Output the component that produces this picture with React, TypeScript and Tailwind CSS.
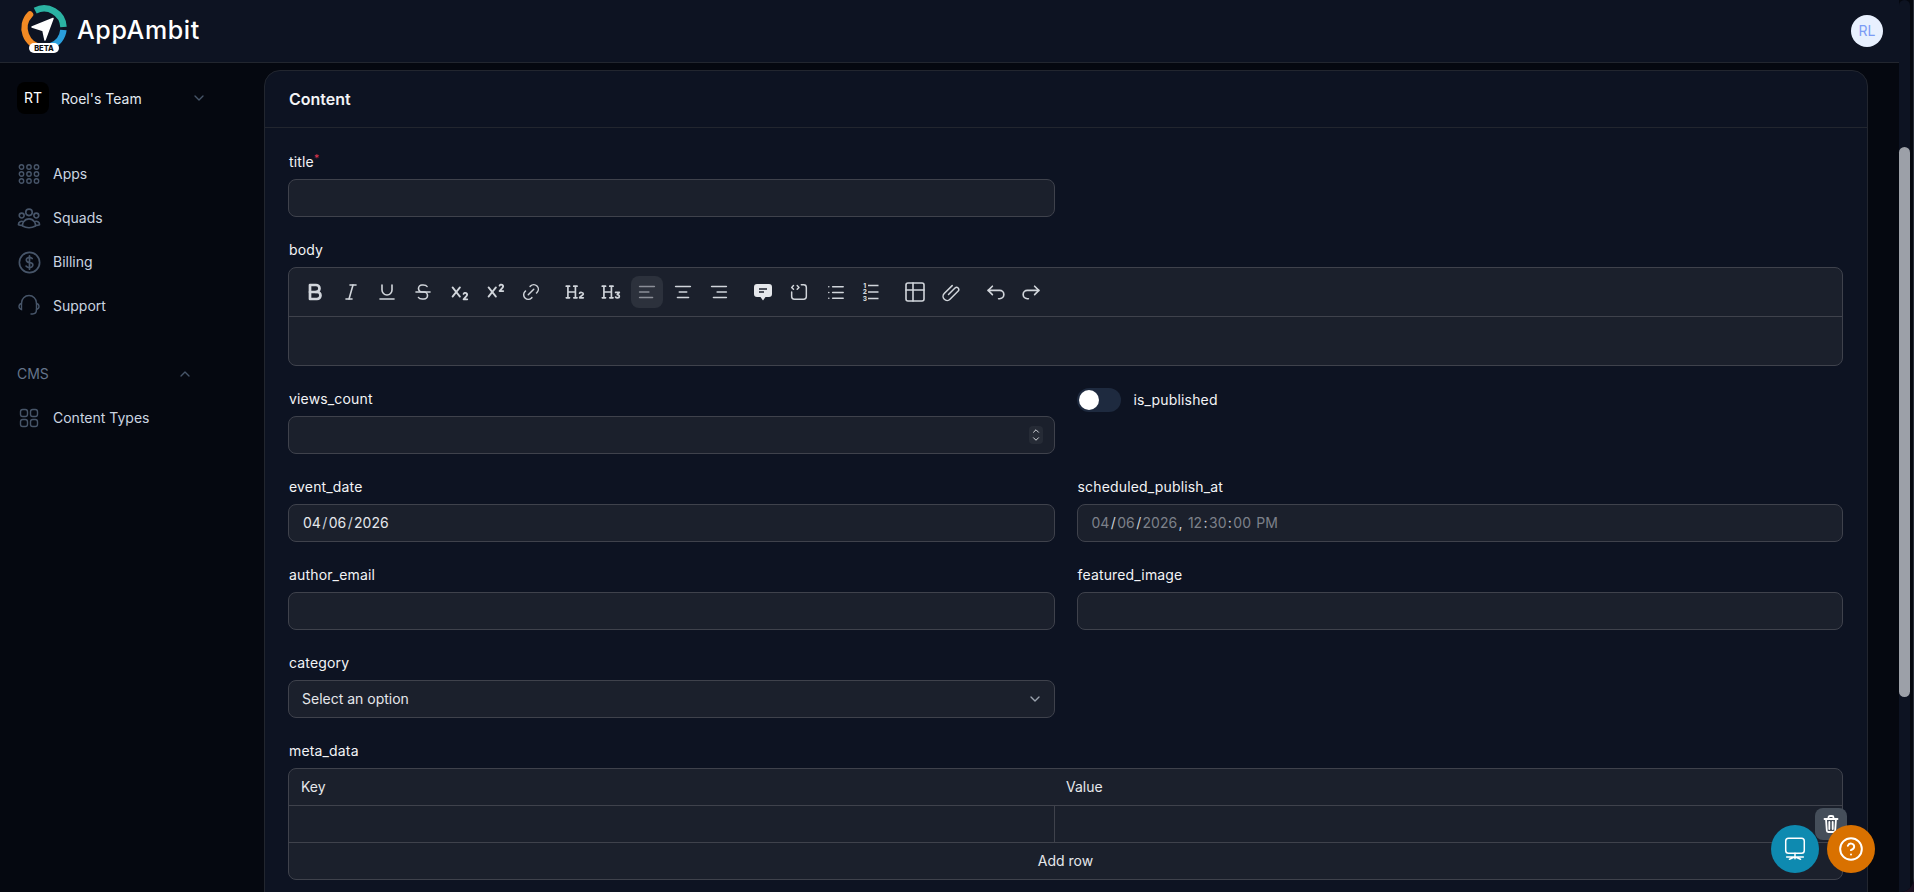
import type { ReactNode } from 'react';
import { ChevronDown, ChevronUp, CircleHelp } from 'lucide-react';
import {
  TbAlignCenter,
  TbAlignLeft,
  TbAlignRight,
  TbArrowBackUp,
  TbArrowForwardUp,
  TbBold,
  TbItalic,
  TbLink,
  TbList,
  TbSourceCode,
  TbStrikethrough,
  TbSubscript,
  TbSuperscript,
  TbTable,
  TbUnderline,
} from 'react-icons/tb';
import { HiOutlineCurrencyDollar, HiOutlineUserGroup } from 'react-icons/hi2';

const font = { fontFamily: 'Inter, sans-serif' };

function Logo() {
  return (
    <svg width="50" height="56" viewBox="0 0 50 56" className="shrink-0">
      <path d="M16.2 7.6A19.5 19.5 0 0 1 44.5 24" fill="none" stroke="#2bb3a3" strokeWidth="6.5" />
      <path d="M11 11.5A19.5 19.5 0 0 0 23 44.4" fill="none" stroke="#f28a24" strokeWidth="6.5" strokeLinecap="round" />
      <path d="M44.4 27A19.5 19.5 0 0 1 31.4 43.3" fill="none" stroke="#2a9fdc" strokeWidth="6.5" />
      <path d="M34 15.5 13 24 24 27.5 26 37Z" fill="#fff" stroke="#fff" strokeWidth="1.5" strokeLinejoin="round" />
      <rect x="10" y="40" width="30" height="10" rx="5" fill="#fff" />
      <text x="25" y="48" textAnchor="middle" fontSize="7.5" fontWeight="800" fill="#111" fontFamily="Inter, sans-serif">
        BETA
      </text>
    </svg>
  );
}

function AppsIcon() {
  return (
    <svg width="22" height="22" viewBox="0 0 22 22" fill="none" stroke="#475569" strokeWidth="1.4">
      {[4, 11, 18].map((y) =>
        [3.5, 11, 18.5].map((x) => <circle key={`${x}-${y}`} cx={x} cy={y} r="2.2" />),
      )}
    </svg>
  );
}

function SupportIcon() {
  return (
    <svg width="24" height="24" viewBox="0 0 24 24" fill="none" stroke="#475569" strokeWidth="1.4" strokeLinecap="round">
      <path d="M4.5 9.5V9a7.5 7.5 0 0 1 15 0v.5" />
      <path d="M4.5 9.5c-1.8.5-2.5 1.8-2.5 3s.8 2.5 2.5 3Z" />
      <path d="M19.5 9.5c1.8.5 2.5 1.8 2.5 3s-.8 2.5-2.5 3Z" />
      <path d="M19.5 15.5c0 3-1.5 4.5-4 4.5h-1.5" />
    </svg>
  );
}

function TypesIcon() {
  return (
    <svg width="20" height="20" viewBox="0 0 20 20" fill="none" stroke="#475569" strokeWidth="1.4">
      <rect x="1.5" y="1.5" width="7" height="7" rx="2.2" />
      <rect x="11.5" y="1.5" width="7" height="7" rx="2.2" />
      <rect x="1.5" y="11.5" width="7" height="7" rx="2.2" />
      <rect x="11.5" y="11.5" width="7" height="7" rx="2.2" />
    </svg>
  );
}

function HeadingIcon({ level }: { level: 2 | 3 }) {
  return (
    <svg width="20" height="20" viewBox="0 0 24 24" fill="none" stroke="currentColor" strokeWidth="2" strokeLinecap="round" strokeLinejoin="round">
      <path d="M1.5 5h4M3.5 5v14M1.5 19h4M10.5 5h4M12.5 5v14M10.5 19h4M3.5 12h9" />
      {level === 2 ? (
        <path d="M17.5 13.5c.6-1.4 4.5-1.4 4.5.9 0 1.7-4.5 2.6-4.5 4.6H22" />
      ) : (
        <path d="M17.5 12.5H22l-2.5 2.6c1.5 0 2.5.8 2.5 2s-1 2-2.3 2c-1 0-1.8-.4-2.2-1.1" />
      )}
    </svg>
  );
}

function QuoteIcon() {
  return (
    <svg width="22" height="22" viewBox="0 0 22 22">
      <path d="M5 3h12a3 3 0 0 1 3 3v7a3 3 0 0 1-3 3h-3.5L11 19.5 8.5 16H5a3 3 0 0 1-3-3V6a3 3 0 0 1 3-3Z" fill="#e5e7eb" />
      <path d="M7 8h8M7 11h5" stroke="#1b202c" strokeWidth="1.6" />
    </svg>
  );
}

function ClipIcon() {
  return (
    <svg width="20" height="20" viewBox="0 0 20 20" fill="none" stroke="currentColor" strokeWidth="1.5" strokeLinecap="round">
      <path d="M7.5 12.5 14 6a2.2 2.2 0 0 1 3.2 3.1L9 17.2a4 4 0 0 1-5.8-5.6l8-8" />
    </svg>
  );
}

function OrderedIcon() {
  return (
    <svg width="20" height="20" viewBox="0 0 20 20" fill="none">
      <path d="M7 3.5h10.5M7 10h10.5M7 16.5h10.5" stroke="currentColor" strokeWidth="1.5" />
      {['1', '2', '3'].map((n, i) => (
        <text key={n} x="3.8" y={5.8 + i * 6.4} textAnchor="middle" fontSize="6.5" fontWeight="800" fill="currentColor" fontFamily="Inter, sans-serif">
          {n}
        </text>
      ))}
    </svg>
  );
}

function NavItem({ icon, label }: { icon: ReactNode; label: string }) {
  return (
    <div className="flex h-11 items-center">
      <span className="flex w-[53px] shrink-0 items-center justify-center pl-[17px] pr-3">{icon}</span>
      <span className="text-sm text-[#cbd5e1]">{label}</span>
    </div>
  );
}

function Sidebar() {
  return (
    <aside className="w-[264px] shrink-0 pt-[19px]">
      <div className="flex h-8 items-center pl-[17px]">
        <div className="flex size-8 items-center justify-center rounded-lg bg-black text-sm text-white">RT</div>
        <span className="ml-3 w-[130px] pt-px text-sm text-[#e2e8f0]">Roel's Team</span>
        <ChevronDown size={16} className="text-[#475569]" />
      </div>
      <nav className="mt-[38px]">
        <NavItem icon={<AppsIcon />} label="Apps" />
        <NavItem icon={<HiOutlineUserGroup size={26} color="#475569" className="-mx-px shrink-0" />} label="Squads" />
        <NavItem icon={<HiOutlineCurrencyDollar size={27} color="#475569" className="-mx-[2px] shrink-0" />} label="Billing" />
        <NavItem icon={<SupportIcon />} label="Support" />
      </nav>
      <div className="mt-9 flex h-5 items-center pl-[17px]">
        <span className="w-[160px] text-sm text-[#64748b]">CMS</span>
        <ChevronUp size={16} className="text-[#475569]" />
      </div>
      <div className="mt-3">
        <NavItem icon={<TypesIcon />} label="Content Types" />
      </div>
    </aside>
  );
}

function Field({ label, required, children }: { label: string; required?: boolean; children: ReactNode }) {
  return (
    <div>
      <label className="mb-2 block h-5 pl-px text-sm leading-[22px] tracking-[0.16px] text-[#f3f4f6]">
        {label}
        {required && <sup className="text-[#e0364f]">*</sup>}
      </label>
      {children}
    </div>
  );
}

const inputClass = 'h-[38px] w-full rounded-lg border border-[#3f424c] bg-[#1b202c] px-[13px] text-sm outline-none';
const dateClass =
  '[&::-webkit-calendar-picker-indicator]:hidden [&::-webkit-datetime-edit-text]:px-[0.4px] [&::-webkit-datetime-edit-text]:text-[#cfd2d8]';

function ToolButton({ children, active }: { children: ReactNode; active?: boolean }) {
  return (
    <span className={`flex size-8 items-center justify-center rounded-lg text-[#d1d5db] ${active ? 'bg-[#2c313c]' : ''}`}>
      {children}
    </span>
  );
}

function Toolbar() {
  const thin = 1.6;
  const groups = [
    [
      <TbBold size={24} strokeWidth={2.7} />,
      <TbItalic size={24} strokeWidth={thin} />,
      <TbUnderline size={24} strokeWidth={thin} />,
      <TbStrikethrough size={24} strokeWidth={thin} />,
      <TbSubscript size={22} strokeWidth={2} />,
      <TbSuperscript size={22} strokeWidth={2} />,
      <TbLink size={22} strokeWidth={thin} />,
    ],
    [
      <HeadingIcon level={2} />,
      <HeadingIcon level={3} />,
      <TbAlignLeft size={22} strokeWidth={1.8} color="#8b8f98" />,
      <TbAlignCenter size={22} strokeWidth={1.8} />,
      <TbAlignRight size={22} strokeWidth={1.8} />,
    ],
    [<QuoteIcon />, <TbSourceCode size={22} strokeWidth={thin} />, <TbList size={23} strokeWidth={thin} />, <OrderedIcon />],
    [<TbTable size={24} strokeWidth={thin} />, <ClipIcon />],
    [<TbArrowBackUp size={25} strokeWidth={thin} />, <TbArrowForwardUp size={25} strokeWidth={thin} />],
  ];
  return (
    <div className="flex h-[49px] items-center gap-3 border-b border-[#3f424c] px-[10px]">
      {groups.map((group, i) => (
        <div key={i} className="flex items-center gap-1">
          {group.map((icon, j) => (
            <ToolButton key={j} active={i === 1 && j === 2}>
              {icon}
            </ToolButton>
          ))}
        </div>
      ))}
    </div>
  );
}

function MetaTable() {
  return (
    <div className="overflow-hidden rounded-lg border border-[#3f424c] bg-[#1b202c] text-sm text-[#e5e7eb]">
      <div className="grid h-[37px] grid-cols-[766px_1fr] items-center border-b border-[#3f424c]">
        <span className="pl-3">Key</span>
        <span className="pl-[11px]">Value</span>
      </div>
      <div className="grid h-[37px] grid-cols-[766px_1fr] border-b border-[#3f424c]">
        <span className="border-r border-[#3f424c]" />
        <span />
      </div>
      <div className="flex h-9 items-center justify-center">Add row</div>
    </div>
  );
}

function ContentCard() {
  return (
    <section className="rounded-2xl border border-[#22262f] bg-[#0d1322]">
      <div className="flex h-[57px] items-center border-b border-[#22262f] pl-6 text-base font-semibold text-[#f3f4f6]">Content</div>
      <div className="grid grid-cols-2 gap-x-[22px] gap-y-[22px] pb-10 pl-[23px] pr-6 pt-[23px]">
        <Field label="title" required>
          <input className={inputClass} />
        </Field>
        <div />
        <div className="col-span-2">
          <Field label="body">
            <div className="rounded-lg border border-[#3f424c] bg-[#1b202c]">
              <Toolbar />
              <div className="h-12" />
            </div>
          </Field>
        </div>
        <Field label="views_count">
          <div className="relative">
            <input className={inputClass} />
            <span className="absolute right-[12px] top-[10px] flex h-[18px] w-[14px] flex-col items-center justify-center rounded bg-[#262b36] text-[#e5e7eb]">
              <ChevronUp size={12} strokeWidth={2.2} className="-mb-[2px]" />
              <ChevronDown size={12} strokeWidth={2.2} />
            </span>
          </div>
        </Field>
        <div className="flex h-6 items-center gap-[13px]">
          <span className="flex h-6 w-11 items-center rounded-full bg-[#1e2a3f] px-[2px]">
            <span className="size-5 rounded-full bg-white" />
          </span>
          <span className="text-sm tracking-[0.16px] text-[#f3f4f6]">is_published</span>
        </div>
        <Field label="event_date">
          <input type="date" defaultValue="2026-04-06" className={`${inputClass} ${dateClass} text-[#e5e7eb]`} />
        </Field>
        <Field label="scheduled_publish_at">
          <input
            type="datetime-local"
            step="1"
            defaultValue="2026-04-06T12:30:00"
            className={`${inputClass} ${dateClass} text-[#7d818a]`}
          />
        </Field>
        <Field label="author_email">
          <input className={inputClass} />
        </Field>
        <Field label="featured_image">
          <input className={inputClass} />
        </Field>
        <Field label="category">
          <div className={`${inputClass} flex items-center justify-between text-[#e5e7eb]`}>
            <span>Select an option</span>
            <ChevronDown size={16} className="-mr-[2px] text-[#9ca3af]" />
          </div>
        </Field>
        <div />
        <div className="col-span-2">
          <Field label="meta_data">
            <MetaTable />
          </Field>
        </div>
      </div>
    </section>
  );
}

export default function App() {
  return (
    <div className="h-screen bg-[#1a1020]">
      <div className="flex h-full overflow-hidden rounded-br-[14px] bg-[#050810]" style={font}>
        <div className="flex min-w-0 flex-1 flex-col">
          <header className="flex h-[63px] shrink-0 items-center justify-between border-b border-[#22262f] bg-[#0d1322] pl-[19px] pr-4">
            <div className="flex items-center gap-2">
              <Logo />
              <span className="text-[25px] font-medium tracking-[0.6px] text-white">AppAmbit</span>
            </div>
            <div className="flex size-8 items-center justify-center rounded-full bg-[#e8f0fe] text-sm text-[#7c9cf5]">RL</div>
          </header>
          <div className="flex min-h-0 flex-1">
            <Sidebar />
            <main className="min-w-0 flex-1 overflow-hidden pr-[31px] pt-[7px]">
              <ContentCard />
            </main>
          </div>
        </div>
        <div className="w-[15px] shrink-0 border-r border-[#2b2f3a]">
          <div className="h-full w-[11px] rounded-t-lg bg-[#0d1322] pt-[147px]">
            <div className="h-[550px] rounded-full bg-[#9ca0a8]" />
          </div>
        </div>
      </div>
      <div className="fixed left-[1815px] top-[808px] flex size-8 items-center justify-center rounded-lg bg-[#454e5a] text-white">
        <svg width="20" height="20" viewBox="0 0 20 20" fill="none" stroke="currentColor" strokeWidth="1.8" strokeLinecap="round" strokeLinejoin="round">
          <path d="M3.5 5h13M7.5 5V3.5c0-.8.6-1.5 1.5-1.5h2c.9 0 1.5.7 1.5 1.5V5M5 5l.8 11.5c0 .8.7 1.5 1.5 1.5h5.4c.8 0 1.5-.7 1.5-1.5L15 5" />
          <path d="M8.3 8v7M11.7 8v7" />
        </svg>
      </div>
      <div className="fixed left-[1771px] top-[825px] flex size-12 items-center justify-center rounded-full bg-[#0e8ab0] text-white">
        <svg width="26" height="26" viewBox="0 0 28 28" fill="none" stroke="currentColor" strokeWidth="1.6" strokeLinecap="round">
          <rect x="4" y="2.5" width="20" height="16" rx="3" />
          <path d="M14 18.5v6M8 25l6-2.5 6 2.5M5 22.5h18" />
        </svg>
      </div>
      <div className="fixed left-[1827px] top-[825px] flex size-12 items-center justify-center rounded-full bg-[#d97100] text-white">
        <CircleHelp size={26} strokeWidth={1.8} />
      </div>
    </div>
  );
}
